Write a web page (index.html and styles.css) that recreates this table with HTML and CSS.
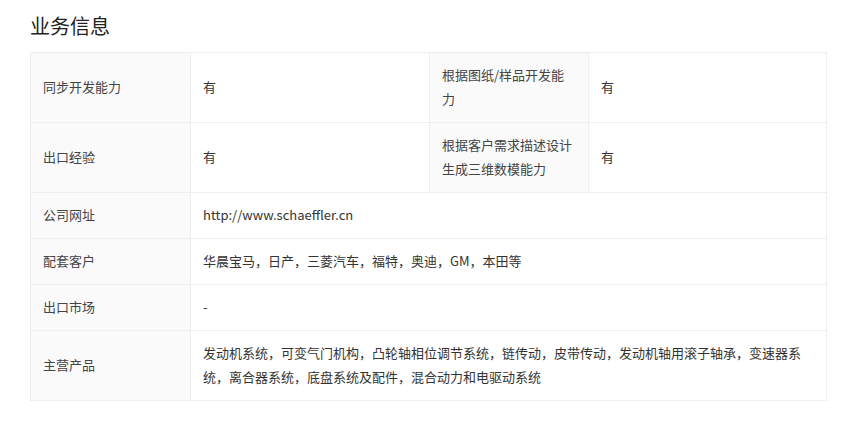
FILE: index.html
```html
<!DOCTYPE html>
<html lang="zh-CN">
<head>
    <meta charset="UTF-8">
    <meta name="viewport" content="width=device-width, initial-scale=1.0">
    <title>业务信息</title>
    <link rel="stylesheet" href="styles.css">
</head>
<body>
    <div class="section">
        <h2 class="section-title">业务信息</h2>
        <table class="info-table">
            <colgroup>
                <col class="col-label">
                <col class="col-value">
                <col class="col-label2">
                <col class="col-value2">
            </colgroup>
            <tr>
                <td class="label">同步开发能力</td>
                <td>有</td>
                <td class="label">根据图纸/样品开发能力</td>
                <td>有</td>
            </tr>
            <tr>
                <td class="label">出口经验</td>
                <td>有</td>
                <td class="label">根据客户需求描述设计生成三维数模能力</td>
                <td>有</td>
            </tr>
            <tr>
                <td class="label">公司网址</td>
                <td colspan="3">http://www.schaeffler.cn</td>
            </tr>
            <tr>
                <td class="label">配套客户</td>
                <td colspan="3">华晨宝马，日产，三菱汽车，福特，奥迪，GM，本田等</td>
            </tr>
            <tr>
                <td class="label">出口市场</td>
                <td colspan="3">-</td>
            </tr>
            <tr>
                <td class="label">主营产品</td>
                <td colspan="3">发动机系统，可变气门机构，凸轮轴相位调节系统，链传动，皮带传动，发动机轴用滚子轴承，变速器系统，离合器系统，底盘系统及配件，混合动力和电驱动系统</td>
            </tr>
        </table>
    </div>
</body>
</html>
```

FILE: styles.css
```css
body {
    margin: 0;
    background-color: #fff;
    font-family: "Noto Sans CJK SC", "Liberation Sans", sans-serif;
    color: #333;
}
.section {
    width: 796px;
    margin: 0 30px;
    padding-top: 12px;
}
.section-title {
    margin: 0 0 12px;
    font-size: 20px;
    line-height: 28px;
    font-weight: normal;
    color: #222;
}
.info-table {
    width: 796px;
    table-layout: fixed;
    border-collapse: collapse;
    font-size: 13px;
    line-height: 24px;
}
.col-label {
    width: 160px;
}
.col-value {
    width: 239px;
}
.col-label2 {
    width: 159px;
}
.col-value2 {
    width: 238px;
}
.info-table td {
    border: 1px solid #eee;
    padding: 10px 12px 11px;
    vertical-align: middle;
    word-break: break-all;
}
.info-table td.label {
    background-color: #fafafa;
    color: #444;
}
```
